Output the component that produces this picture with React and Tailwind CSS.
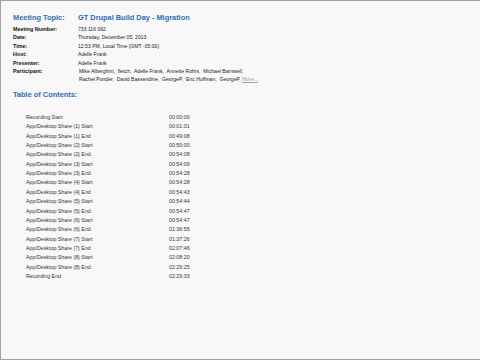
import React from "react";

const info = [
  ["Meeting Number:", "733 116 092"],
  ["Date:", "Thursday, December 05, 2013"],
  ["Time:", "12:53 PM, Local Time (GMT -05:00)"],
  ["Host:", "Adelle Frank"],
  ["Presenter:", "Adelle Frank"],
];

const toc = [
  ["Recording Start", "00:00:00"],
  ["App/Desktop Share (1) Start", "00:01:01"],
  ["App/Desktop Share (1) End", "00:49:08"],
  ["App/Desktop Share (2) Start", "00:50:00"],
  ["App/Desktop Share (2) End", "00:54:08"],
  ["App/Desktop Share (3) Start", "00:54:09"],
  ["App/Desktop Share (3) End", "00:54:28"],
  ["App/Desktop Share (4) Start", "00:54:28"],
  ["App/Desktop Share (4) End", "00:54:43"],
  ["App/Desktop Share (5) Start", "00:54:44"],
  ["App/Desktop Share (5) End", "00:54:47"],
  ["App/Desktop Share (6) Start", "00:54:47"],
  ["App/Desktop Share (6) End", "01:36:55"],
  ["App/Desktop Share (7) Start", "01:37:26"],
  ["App/Desktop Share (7) End", "02:07:46"],
  ["App/Desktop Share (8) Start", "02:08:20"],
  ["App/Desktop Share (8) End", "02:29:25"],
  ["Recording End", "02:29:33"],
];

export default function App() {
  return (
    <div className="w-[480px] h-[360px] overflow-hidden bg-[#f8f8f8] border-t border-l border-b border-[#a3a3a3] font-['Liberation_Sans',Arial,sans-serif] text-[#222]">
      <div className="pl-[12px] pt-[11px]">
        <div className="grid grid-cols-[65px_1fr] leading-[11px] text-[7.4px] font-bold text-[#2f6db3]">
          <div>Meeting Topic:</div>
          <div>GT Drupal Build Day - Migration</div>
        </div>
        <div className="mt-[2px] text-[5.1px] leading-[8.4px] whitespace-nowrap">
          {info.map(([k, v]) => (
            <div key={k} className="grid grid-cols-[65px_1fr]">
              <div className="font-bold text-[5.4px] text-[#111]">{k}</div>
              <div>{v}</div>
            </div>
          ))}
          <div className="grid grid-cols-[66px_1fr]">
            <div className="font-bold text-[5.4px] text-[#111]">Participant:</div>
            <div>
              <div>Mike Alberghini,&nbsp; fletch,&nbsp; Adelle Frank,&nbsp; Annette Rohrs,&nbsp; Michael Barnwell,</div>
              <div>
                Rachel Ponder,&nbsp; David Bassendine,&nbsp; GeorgeP,&nbsp; Eric Huffman,&nbsp; GeorgeP,{" "}
                <span className="text-[#a0a0a0] underline">More...</span>
              </div>
            </div>
          </div>
        </div>
        <div className="mt-[5px] leading-[11px] text-[7.4px] font-bold text-[#2f6db3]">Table of Contents:</div>
        <div className="mt-[13px] pl-[13px] text-[5.3px] leading-[9.37px] text-[#333]">
          {toc.map(([k, v], i) => (
            <div key={i} className="grid grid-cols-[143px_1fr]">
              <div>{k}</div>
              <div>{v}</div>
            </div>
          ))}
        </div>
      </div>
    </div>
  );
}
